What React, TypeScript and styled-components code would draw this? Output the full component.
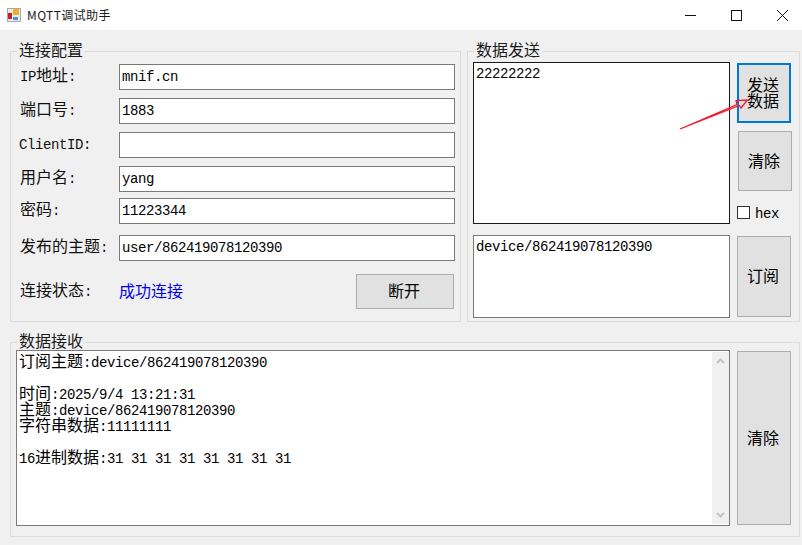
import React from "react";
import styled, { createGlobalStyle } from "styled-components";

const GlobalStyle = createGlobalStyle`
  html, body {
    margin: 0;
    padding: 0;
    background: #f0f0f0;
  }
  * {
    box-sizing: border-box;
  }
`;

const cjk = `"Noto Sans CJK SC", "Liberation Sans", sans-serif`;

const Window = styled.div`
  position: relative;
  width: 802px;
  height: 545px;
  overflow: hidden;
  background: #f0f0f0;
  font-family: ${cjk};
  font-size: 16px;
  line-height: 16px;
  color: #000;
`;

const TitleBar = styled.div`
  display: flex;
  align-items: center;
  height: 30px;
  padding-left: 7px;
  background: #fff;
`;

const TitleText = styled.span`
  margin-left: 6px;
  font-size: 12px;
  letter-spacing: 0.4px;
  color: #1a1a1a;
`;

const WindowButtons = styled.div`
  display: flex;
  margin-left: auto;
  margin-right: -3px;
`;

const WindowButton = styled.div`
  display: flex;
  align-items: center;
  justify-content: center;
  width: 46px;
  height: 30px;
`;

const Body = styled.div`
  display: grid;
  grid-template-columns: 451px 333px;
  grid-template-rows: 271px 195px;
  column-gap: 6px;
  row-gap: 20px;
  padding: 21px 0 0 10px;
`;

const Group = styled.section<{ $wide?: boolean }>`
  position: relative;
  border: 1px solid #dcdcdc;
  grid-column: ${(p) => (p.$wide ? "1 / span 2" : "auto")};
`;

const Legend = styled.h2`
  position: absolute;
  top: -11px;
  left: 6px;
  margin: 0;
  padding: 0 2px;
  background: #f0f0f0;
  font-size: 16px;
  font-weight: 400;
  line-height: 17px;
  color: #1a1a1a;
`;

const ConfigForm = styled.div`
  display: flex;
  flex-direction: column;
  padding: 12px 5px 0 8px;
`;

const FormRow = styled.div<{ $gap?: number }>`
  display: grid;
  grid-template-columns: 100px 1fr;
  align-items: center;
  height: 26px;
  margin-bottom: ${(p) => p.$gap ?? 8}px;
`;

const FieldLabel = styled.label<{ $latin?: boolean }>`
  padding: 0 0 3px ${(p) => (p.$latin ? 0 : 1)}px;
  font-size: 16px;
  white-space: nowrap;
  color: #111;
`;

const Field = styled.div`
  height: 26px;
  padding: 1px 0 0 2px;
  border: 1px solid #7a7a7a;
  background: #fff;
  white-space: nowrap;
`;

const Mono = styled.span`
  font-family: "Liberation Mono", monospace;
  font-size: 14px;
  letter-spacing: -0.4px;
`;

const StatusRow = styled.div`
  display: grid;
  grid-template-columns: 100px 1fr 98px;
  align-items: center;
  height: 35px;
  margin-top: 5px;
`;

const StatusText = styled.span`
  padding-bottom: 3px;
  color: #0000f0;
`;

const PushButton = styled.button<{ $focused?: boolean }>`
  display: flex;
  align-items: center;
  justify-content: center;
  padding: 0 2px 3px 0;
  border: ${(p) => (p.$focused ? "2px solid #0078d7" : "1px solid #adadad")};
  border-radius: 0;
  background: #e1e1e1;
  color: #000;
  font-family: ${cjk};
  font-size: 16px;
  line-height: 16px;
`;

const DisconnectButton = styled(PushButton)`
  width: 98px;
  height: 35px;
  margin-left: -1px;
`;

const SendLayout = styled.div`
  display: grid;
  grid-template-columns: 257px 54px;
  grid-template-rows: 162px 83px;
  column-gap: 7px;
  row-gap: 11px;
  padding: 10px 0 0 5px;
`;

const TextBox = styled.div<{ $dark?: boolean }>`
  padding: 0 0 0 2px;
  border: 1px solid ${(p) => (p.$dark ? "#1a1a1a" : "#7a7a7a")};
  background: #fff;
  white-space: pre;
`;

const SendColumn = styled.div`
  display: flex;
  flex-direction: column;
  padding-top: 1px;
`;

const SendButton = styled(PushButton)`
  width: 54px;
  height: 60px;
  text-align: center;
`;

const ClearButton = styled(PushButton)`
  width: 54px;
  height: 60px;
  margin: 8px 0 0 1px;
`;

const HexOption = styled.div`
  display: flex;
  align-items: center;
  gap: 5px;
  margin-top: 15px;
  height: 13px;
`;

const CheckBox = styled.span`
  width: 13px;
  height: 13px;
  border: 1px solid #333;
  background: #fff;
`;

const HexLabel = styled(Mono)`
  padding-top: 2px;
`;

const SubscribeButton = styled(PushButton)`
  margin-top: 1px;
  height: 81px;
`;

const ReceiveLayout = styled.div`
  display: grid;
  grid-template-columns: 714px 54px;
  column-gap: 7px;
  padding: 7px 0 0 5px;
`;

const LogBox = styled.div`
  position: relative;
  height: 176px;
  padding: 1px 0 0 2px;
  border: 1px solid #7a7a7a;
  background: #fff;
`;

const LogLine = styled.div`
  height: 16px;
  white-space: pre;
`;

const ScrollBar = styled.div`
  position: absolute;
  top: 1px;
  right: 0;
  bottom: 1px;
  display: flex;
  flex-direction: column;
  align-items: center;
  justify-content: space-between;
  width: 17px;
  padding: 6px 0;
  background: #f0f0f0;
`;

const ReceiveClear = styled(PushButton)`
  margin-top: 1px;
  height: 174px;
`;

const ArrowOverlay = styled.svg`
  position: absolute;
  top: 0;
  left: 0;
  pointer-events: none;
`;

const AppIcon = () => (
  <svg width="14" height="14" viewBox="0 0 14 14">
    <rect x="0.5" y="0.5" width="13" height="13" fill="#ececec" stroke="#a8a8a8" />
    <rect x="1" y="5" width="4" height="6" fill="#c8201c" />
    <rect x="6" y="1" width="6" height="6" fill="#eeb028" />
    <rect x="6" y="9" width="5" height="3" fill="#4a90e8" />
  </svg>
);

const Chevron = ({ up }: { up?: boolean }) => (
  <svg width="9" height="6" viewBox="0 0 9 6">
    <path
      d={up ? "M1 5 L4.5 1.5 L8 5" : "M1 1 L4.5 4.5 L8 1"}
      fill="none"
      stroke="#c4c4c4"
      strokeWidth="2"
    />
  </svg>
);

const configRows = [
  { id: "ip", label: <><Mono>IP</Mono>地址<Mono>:</Mono></>, value: "mnif.cn" },
  { id: "port", label: <>端口号<Mono>:</Mono></>, value: "1883" },
  { id: "client", latin: true, label: <Mono>ClientID:</Mono>, value: "" },
  { id: "user", label: <>用户名<Mono>:</Mono></>, value: "yang", gap: 6 },
  { id: "pass", label: <>密码<Mono>:</Mono></>, value: "11223344", gap: 11 },
  { id: "topic", label: <>发布的主题<Mono>:</Mono></>, value: "user/862419078120390" },
];

const logLines = [
  <>订阅主题<Mono>:device/862419078120390</Mono></>,
  <></>,
  <>时间<Mono>:2025/9/4 13:21:31</Mono></>,
  <>主题<Mono>:device/862419078120390</Mono></>,
  <>字符串数据<Mono>:11111111</Mono></>,
  <></>,
  <><Mono>16</Mono>进制数据<Mono>:31 31 31 31 31 31 31 31</Mono></>,
];

export default function App() {
  return (
    <Window>
      <GlobalStyle />
      <TitleBar>
        <AppIcon />
        <TitleText>MQTT调试助手</TitleText>
        <WindowButtons>
          <WindowButton>
            <svg width="11" height="11" viewBox="0 0 11 11">
              <path d="M0 5.5 H11" stroke="#111" />
            </svg>
          </WindowButton>
          <WindowButton>
            <svg width="11" height="11" viewBox="0 0 11 11">
              <rect x="0.5" y="0.5" width="10" height="10" fill="none" stroke="#111" />
            </svg>
          </WindowButton>
          <WindowButton>
            <svg width="11" height="11" viewBox="0 0 11 11">
              <path d="M0 0 L11 11 M11 0 L0 11" stroke="#111" />
            </svg>
          </WindowButton>
        </WindowButtons>
      </TitleBar>

      <Body>
        <Group>
          <Legend>连接配置</Legend>
          <ConfigForm>
            {configRows.map((row) => (
              <FormRow key={row.id} $gap={row.gap}>
                <FieldLabel $latin={row.latin}>{row.label}</FieldLabel>
                <Field>
                  <Mono>{row.value}</Mono>
                </Field>
              </FormRow>
            ))}
            <StatusRow>
              <FieldLabel>
                连接状态<Mono>:</Mono>
              </FieldLabel>
              <StatusText>成功连接</StatusText>
              <DisconnectButton>断开</DisconnectButton>
            </StatusRow>
          </ConfigForm>
        </Group>

        <Group>
          <Legend>数据发送</Legend>
          <SendLayout>
            <TextBox $dark>
              <Mono>22222222</Mono>
            </TextBox>
            <SendColumn>
              <SendButton $focused>
                发送
                <br />
                数据
              </SendButton>
              <ClearButton>清除</ClearButton>
              <HexOption>
                <CheckBox />
                <HexLabel>hex</HexLabel>
              </HexOption>
            </SendColumn>
            <TextBox>
              <Mono>device/862419078120390</Mono>
            </TextBox>
            <SubscribeButton>订阅</SubscribeButton>
          </SendLayout>
        </Group>

        <Group $wide>
          <Legend>数据接收</Legend>
          <ReceiveLayout>
            <LogBox>
              {logLines.map((line, i) => (
                <LogLine key={i}>{line}</LogLine>
              ))}
              <ScrollBar>
                <Chevron up />
                <Chevron />
              </ScrollBar>
            </LogBox>
            <ReceiveClear>清除</ReceiveClear>
          </ReceiveLayout>
        </Group>
      </Body>

      <ArrowOverlay width="802" height="545" viewBox="0 0 802 545">
        <path
          d="M680 129 L737 104.5 L736 100.5 L747.5 100 L741 108 L739.5 105.5 Z"
          fill="none"
          stroke="#f01c30"
          strokeWidth="1.3"
        />
      </ArrowOverlay>
    </Window>
  );
}
